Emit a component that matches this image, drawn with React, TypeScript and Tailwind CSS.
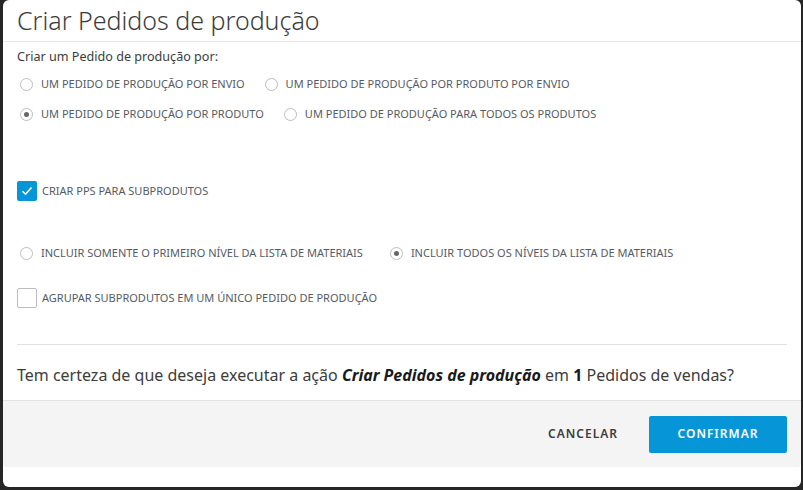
import React from 'react';

const font = { fontFamily: '"Noto Sans", "Open Sans", sans-serif' };

const Radio = ({ checked, label }: { checked?: boolean; label: string }) => {
  return (
    <div className="flex items-center gap-[8px]">
      <span className="ml-[3px] flex h-[13px] w-[13px] items-center justify-center rounded-full border border-[#bdbdbd] bg-white">
        {checked && <span className="h-[5px] w-[5px] rounded-full bg-[#666]" />}
      </span>
      <span className="text-[11px] text-[#555b63]">{label}</span>
    </div>
  );
};

const Checkbox = ({ checked, label }: { checked?: boolean; label: string }) => {
  return (
    <div className="flex items-center gap-[5px]">
      {checked ? (
        <span className="flex h-[20px] w-[20px] items-center justify-center rounded-[2px] bg-[#0696d7]">
          <svg width="12" height="10" viewBox="0 0 12 10" fill="none">
            <path d="M1.5 5.2 4.5 8.2 10.5 1.5" stroke="white" strokeWidth="1.6" />
          </svg>
        </span>
      ) : (
        <span className="h-[20px] w-[20px] rounded-[2px] border border-[#bdbdbd] bg-white" />
      )}
      <span className="text-[11px] text-[#555b63]">{label}</span>
    </div>
  );
};

export default function App() {
  return (
    <div className="h-[490px] w-[803px] bg-[#262626] pl-[3px]" style={font}>
      <div className="flex h-[487px] w-[798px] flex-col rounded-[6px] bg-white">
        <div className="flex h-[42px] items-center border-b border-[#e6e6e6] px-[14px]">
          <h1 className="text-[25px] font-light text-[#3c3c3c]">Criar Pedidos de produção</h1>
        </div>
        <div className="flex flex-1 flex-col px-[14px]">
          <p className="mt-[6px] text-[12.6px] text-[#3c3c3c]">Criar um Pedido de produção por:</p>
          <div className="mt-[9px] flex gap-[17px]">
            <Radio label="UM PEDIDO DE PRODUÇÃO POR ENVIO" />
            <Radio label="UM PEDIDO DE PRODUÇÃO POR PRODUTO POR ENVIO" />
          </div>
          <div className="mt-[14px] flex gap-[17px]">
            <Radio checked label="UM PEDIDO DE PRODUÇÃO POR PRODUTO" />
            <Radio label="UM PEDIDO DE PRODUÇÃO PARA TODOS OS PRODUTOS" />
          </div>
          <div className="mt-[58px]">
            <Checkbox checked label="CRIAR PPS PARA SUBPRODUTOS" />
          </div>
          <div className="mt-[44px] flex gap-[24px]">
            <Radio label="INCLUIR SOMENTE O PRIMEIRO NÍVEL DA LISTA DE MATERIAIS" />
            <Radio checked label="INCLUIR TODOS OS NÍVEIS DA LISTA DE MATERIAIS" />
          </div>
          <div className="mt-[27px]">
            <Checkbox label="AGRUPAR SUBPRODUTOS EM UM ÚNICO PEDIDO DE PRODUÇÃO" />
          </div>
          <div className="mt-[36px] border-t border-[#e2e2e2]" />
          <p className="mt-[18px] text-[16px] text-[#3c3c3c]">
            Tem certeza de que deseja executar a ação{' '}
            <b className="font-bold italic text-[#1a1a1a]">Criar Pedidos de produção</b> em{' '}
            <b className="font-bold text-[#1a1a1a]">1</b> Pedidos de vendas?
          </p>
        </div>
        <div className="mb-[20px] flex h-[67px] items-center justify-end gap-[31px] rounded-b-[4px] border-t border-[#e2e2e2] bg-[#f4f4f4] pr-[14px]">
          <button className="text-[12px] font-semibold tracking-[1px] text-[#3c3c3c]">CANCELAR</button>
          <button className="h-[37px] w-[138px] rounded-[2px] bg-[#0696d7] text-[12px] font-semibold tracking-[1px] text-white">
            CONFIRMAR
          </button>
        </div>
      </div>
    </div>
  );
}
